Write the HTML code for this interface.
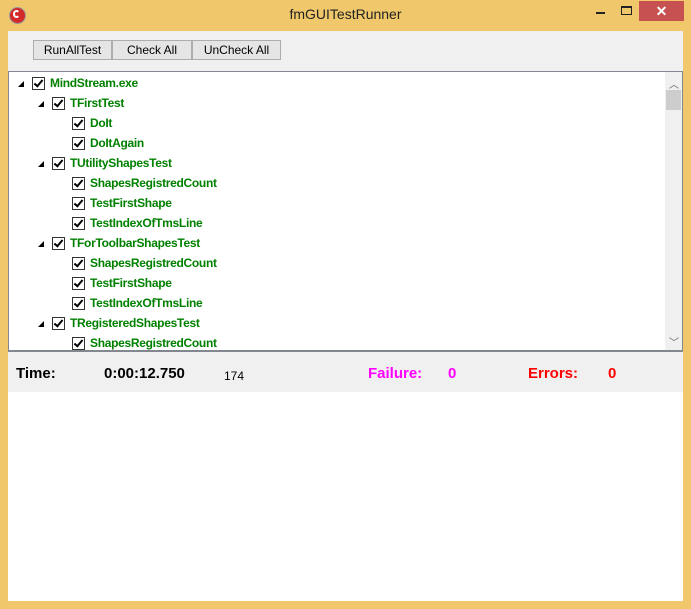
<!DOCTYPE html>
<html><head><style>
body{margin:0;width:691px;height:609px;background:#F0C86B;position:relative;overflow:hidden;font-family:"Liberation Sans",sans-serif}
.abs{position:absolute}
.title{left:0;top:6px;width:691px;text-align:center;font-size:14px;color:#222}
.client{left:8px;top:31px;width:675px;height:570px;background:#fff}
.tb{left:8px;top:31px;width:675px;height:40px;background:#f0f0f0}
.btn{top:40px;height:20px;border:1px solid #adadad;background:#e5e5e5;font-size:12px;line-height:19px;text-align:center;color:#000;box-sizing:border-box}
.tree{left:8px;top:71px;width:675px;height:281px;border:1px solid #828790;border-bottom:2px solid #828790;box-sizing:border-box;background:#fff}
.row{position:absolute;height:20px;font-size:12px;font-weight:bold;color:#008000;line-height:20px;letter-spacing:-0.3px}
.cb{position:absolute;width:11px;height:11px;border:1px solid #333;background:#fff;top:4px}
.cb:after{content:"";position:absolute;left:3px;top:0px;width:3px;height:7px;border:solid #000;border-width:0 2px 2px 0;transform:rotate(40deg)}
.tri{position:absolute;width:0;height:0;border-left:6px solid transparent;border-bottom:6px solid #000;top:8px}
.status{left:8px;top:352px;width:675px;height:40px;background:#f0f0f0;font-weight:bold;font-size:15px}
.status span{position:absolute;top:13px}
</style></head><body>
<div class="abs" style="left:9px;top:7px;width:15px;height:15px;border-radius:50%;background:#d42a2a;border:1px solid #999"></div>
<div class="abs" style="left:13px;top:10px;width:7px;height:8px;border-radius:50%;border:2px solid #fff;border-right-color:transparent;box-sizing:border-box"></div>
<div class="abs title">fmGUITestRunner</div>
<div class="abs" style="left:596px;top:12px;width:9px;height:2px;background:#222"></div>
<div class="abs" style="left:621px;top:6px;width:9px;height:6px;border:1px solid #222;border-top-width:2px"></div>
<div class="abs" style="left:639px;top:1px;width:45px;height:20px;background:#C75050;color:#fff;text-align:center;font-size:14px;line-height:20px;font-weight:bold">✕</div>
<div class="abs client"></div>
<div class="abs tb"></div>
<div class="abs btn" style="left:33px;width:79px">RunAllTest</div>
<div class="abs btn" style="left:112px;width:80px">Check All</div>
<div class="abs btn" style="left:192px;width:89px">UnCheck All</div>
<div class="abs tree">
<div class="abs" style="left:656px;top:0;width:17px;height:278px;background:#f0f0f0"></div>
<div class="abs" style="left:657px;top:18px;width:15px;height:20px;background:#cdcdcd"></div>
<div class="abs" style="left:660px;top:4px;font-size:10px;color:#606060">︿</div>
<div class="abs" style="left:660px;top:262px;font-size:10px;color:#606060">﹀</div>
</div>
<div id="rows"></div>
<div class="abs status">
<span style="left:8px">Time:</span>
<span style="left:96px">0:00:12.750</span>
<span style="left:216px;font-weight:normal;font-size:12px;top:17px">174</span>
<span style="left:360px;color:#ff00ff">Failure:</span>
<span style="left:440px;color:#ff00ff">0</span>
<span style="left:520px;color:#ff0000">Errors:</span>
<span style="left:600px;color:#ff0000">0</span>
</div>
<script>
var d=[[0,1,"MindStream.exe"],[1,1,"TFirstTest"],[2,0,"DoIt"],[2,0,"DoItAgain"],[1,1,"TUtilityShapesTest"],[2,0,"ShapesRegistredCount"],[2,0,"TestFirstShape"],[2,0,"TestIndexOfTmsLine"],[1,1,"TForToolbarShapesTest"],[2,0,"ShapesRegistredCount"],[2,0,"TestFirstShape"],[2,0,"TestIndexOfTmsLine"],[1,1,"TRegisteredShapesTest"],[2,0,"ShapesRegistredCount"]];
var h="";d.forEach(function(r,i){var y=73+i*20,x=r[0]*20;
h+='<div class="row" style="left:0;top:'+y+'px;width:660px">'+(r[1]?'<div class="tri" style="left:'+(18+x)+'px"></div>':'')+'<div class="cb" style="left:'+(32+x)+'px"></div><span style="position:absolute;left:'+(50+x)+'px">'+r[2]+'</span></div>';});
document.getElementById("rows").innerHTML=h;
</script>
</body></html>
